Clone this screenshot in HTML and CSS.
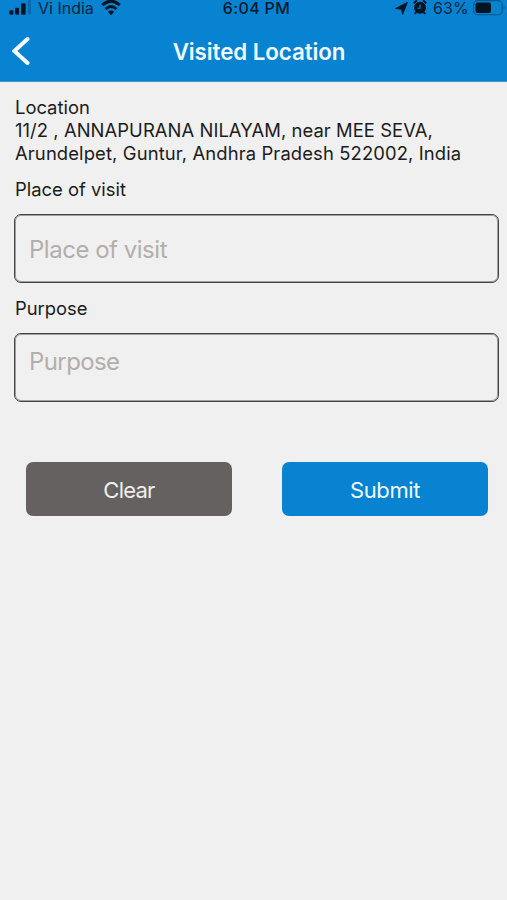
FILE: index.html
```html
<!DOCTYPE html>
<html lang="en">
<head>
<meta charset="utf-8">
<title>Visited Location</title>
<link rel="stylesheet" href="styles.css">
</head>
<body>
<header class="header">
  <div class="status">
    <div class="status-left">
      <svg class="signal" width="22" height="15" viewBox="0 0 22 15"><rect x=".4" y="10.2" width="4" height="4.6" rx="1"/><rect x="6" y="7.8" width="4" height="7" rx="1"/><rect x="12" y="3.2" width="4.6" height="11.6" rx="1"/><rect x="19" y="0" width="3" height="14.5" rx="1" opacity=".22"/></svg>
      <span class="carrier">Vi India</span>
      <svg class="wifi" width="20" height="16" viewBox="0 0 20 16"><path d="M1.2 5.2Q10-3 18.8 5.2" fill="none" stroke="#031522" stroke-width="3"/><path d="M4.6 9Q10 4 15.4 9" fill="none" stroke="#031522" stroke-width="2.8"/><path d="M6.8 11.8Q10 9 13.2 11.8L10 15.2Z"/></svg>
    </div>
    <span class="clock">6:04 PM</span>
    <div class="status-right">
      <svg class="arrow" width="13" height="13" viewBox="0 0 13 13"><path d="M12.8 0 7.6 12.8 6.4 7.4.2 6.6Z" stroke="#031522" stroke-width=".5"/></svg>
      <svg class="alarm" width="14" height="15" viewBox="0 0 14 15"><circle cx="7" cy="7.7" r="6"/><path d="M.8 3.2 4 .3M13.2 3.2 10 .3M3.4 12 1.8 14M10.6 12l1.6 2" stroke="#031522" stroke-width="2"/><path d="M7 4.5v3.7H4.7" fill="none" stroke="#0984d2" stroke-width="1.1"/></svg>
      <span class="percent">63%</span>
      <svg class="battery" width="34" height="16" viewBox="0 0 34 16"><rect x=".6" y=".6" width="28.5" height="14.2" rx="4" fill="none" stroke="#065789" stroke-width="1.1"/><rect x="2.5" y="2.4" width="15.5" height="10.6" rx="2"/><path d="M30.5 5v5.4q2.3-2.7 0-5.4" fill="#065789"/></svg>
    </div>
  </div>
  <div class="navbar">
    <svg class="back" width="18" height="28" viewBox="0 0 18 28"><path d="M15.5 2 2.4 14l13.1 12" fill="none" stroke="#f4fcff" stroke-width="4" stroke-linecap="round" stroke-linejoin="miter"/></svg>
    <h1 class="title">Visited Location</h1>
    <span></span>
  </div>
</header>
<main class="form">
  <div class="address">
    <div>Location</div>
    <div class="street">11/2 , ANNAPURANA NILAYAM, near MEE SEVA,</div>
    <div class="city">Arundelpet, Guntur, Andhra Pradesh 522002, India</div>
  </div>
  <label class="label" for="place">Place of visit</label>
  <input class="field" id="place" placeholder="Place of visit">
  <label class="label second" for="purpose">Purpose</label>
  <textarea class="field area" id="purpose" placeholder="Purpose"></textarea>
  <div class="actions">
    <button class="btn clear">Clear</button>
    <button class="btn submit">Submit</button>
  </div>
</main>
</body>
</html>
```

FILE: styles.css
```css
* { box-sizing: border-box; }
body { margin: 0; height: 900px; overflow: hidden; background: #f0f0f0; color: #1c1c1c; font-family: Inter, "Liberation Sans", sans-serif; font-size: 18.4px; }
svg { display: block; flex: none; }
.header { height: 82px; background: #0883d1; border-bottom: 1px solid #4a94c2; }
.status { height: 21px; display: grid; grid-template-columns: 1fr auto 1fr; fill: #031522; color: #04263e; font-size: 16px; line-height: 17px; }
.status-left { display: flex; padding-left: 9px; }
.carrier { margin-left: 7px; }
.wifi { margin-left: 7px; }
.clock { font-weight: 500; color: #03192a; letter-spacing: .35px; padding-left: 6px; }
.status-right { display: flex; justify-content: flex-end; }
.arrow { margin: 2px 5px 0 0; }
.alarm { margin: 0 6px 0 0; }
.percent { margin-right: 4px; letter-spacing: .2px; }
.navbar { height: 60px; display: grid; grid-template-columns: 40px 1fr 40px; align-items: center; }
.back { margin-left: 12px; }
.title { margin: 0 0 0 11px; text-align: center; font-size: 22.3px; font-weight: 600; letter-spacing: -.06px; color: #effaff; white-space: nowrap; }
.form { padding: 14px 8px 0 14px; }
.address { padding-left: 1px; line-height: 23.2px; white-space: nowrap; }
.street { letter-spacing: .07px; }
.city { letter-spacing: .13px; }
.label { display: block; padding-left: 1px; line-height: 24px; margin-top: 11.4px; }
.field { display: block; width: 100%; height: 69px; margin: 13px 0 0; padding: 2px 14px 0; border: 1px solid #444; box-shadow: inset 0 0 0 1px #a0a0a0; border-radius: 7px; background: transparent; font: 24px Inter, "Liberation Sans", sans-serif; letter-spacing: -.48px; resize: none; outline: 0; }
.field::placeholder { color: #b4aeab; opacity: 1; }
.second { margin-top: 13px; }
.area { padding-top: 13px; letter-spacing: -.6px; }
.actions { display: flex; justify-content: space-between; padding: 0 11px 0 12px; margin-top: 60px; }
.btn { width: 206px; height: 54px; border: 0; border-radius: 7px; padding: 2px 0 0; color: #effaff; font: 22px Inter, "Liberation Sans", sans-serif; letter-spacing: -.4px; }
.clear { background: #646160; color: #f0eeed; letter-spacing: -.75px; }
.submit { background: #0883d1; }
```
